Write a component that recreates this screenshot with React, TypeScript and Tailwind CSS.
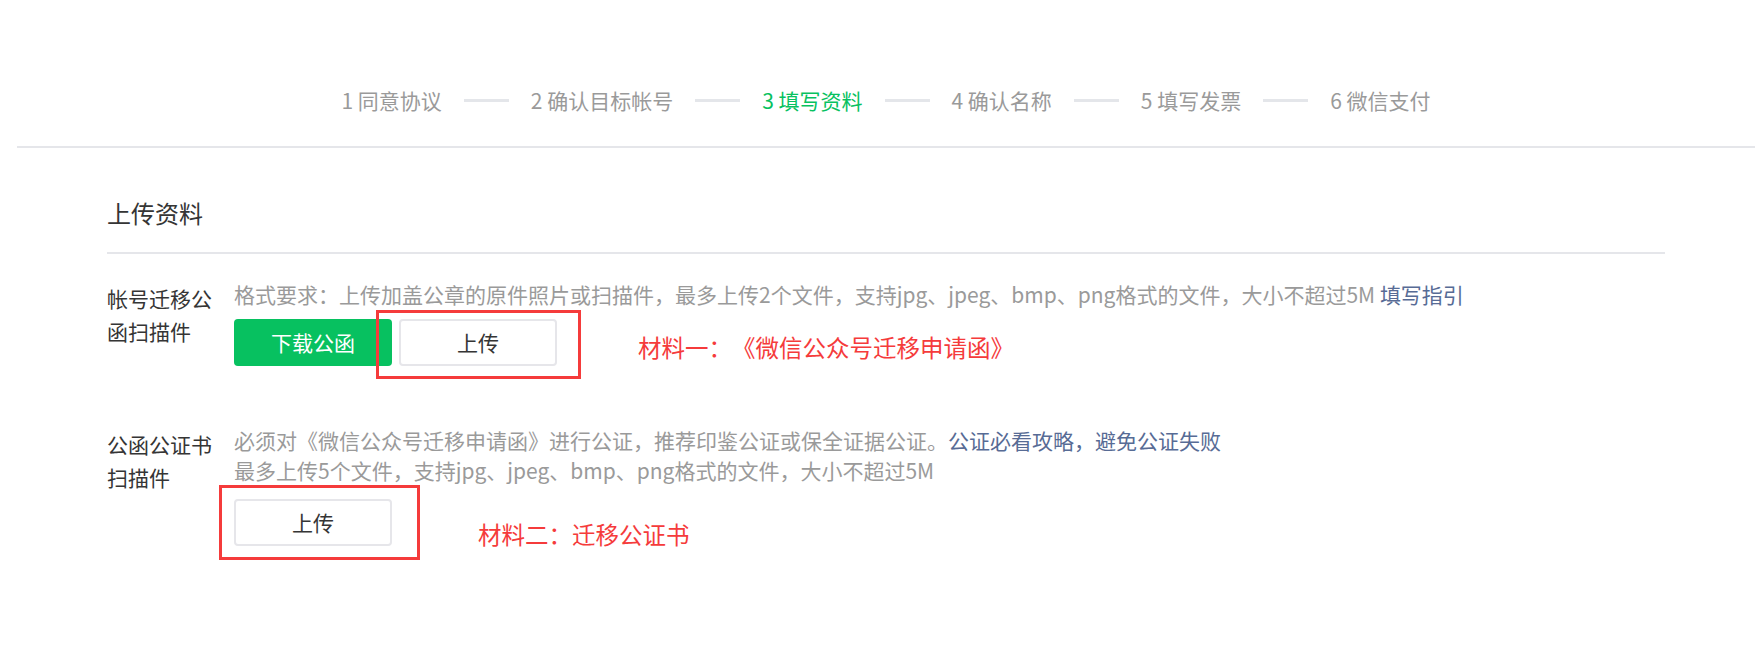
import React from "react";

const steps = [
  { label: "1 同意协议" },
  { label: "2 确认目标帐号" },
  { label: "3 填写资料", active: true },
  { label: "4 确认名称" },
  { label: "5 填写发票" },
  { label: "6 微信支付" },
];

function StepBar() {
  return (
    <div className="h-[148px] pt-[85px] border-b-2 border-[#e5e6ea] flex justify-center">
      <div className="flex items-center h-[30px]">
        {steps.map((s, i) => (
          <React.Fragment key={s.label}>
            {i > 0 && <div className="mx-[22px] h-[3px] w-[45px] bg-[#e4e6ea]" />}
            <span
              className={
                s.active
                  ? "text-[21px] leading-[30px] text-[#07c160] whitespace-nowrap"
                  : "text-[21px] leading-[30px] text-[#9a9a9a] whitespace-nowrap"
              }
            >
              {s.label}
            </span>
          </React.Fragment>
        ))}
      </div>
    </div>
  );
}

function RedNote({ children, className }: { children: React.ReactNode; className: string }) {
  return (
    <span className={"text-[23.5px] leading-[30px] text-[#f53b3b] whitespace-nowrap " + className}>
      {children}
    </span>
  );
}

function FormRow({ label, children }: { label: string; children: React.ReactNode }) {
  return (
    <div className="flex">
      <div className="w-[127px] pr-[15px] pt-[3px] shrink-0 text-[21px] leading-[33px] text-[#353535]">
        {label}
      </div>
      <div className="flex-1">{children}</div>
    </div>
  );
}

export default function App() {
  return (
    <div className="min-h-screen bg-white font-['Noto_Sans_CJK_SC','Noto_Sans',sans-serif] [text-spacing-trim:space-all]">
      <div className="ml-[17px]">
        <StepBar />

        <div className="px-[90px]">
          <div className="pt-[48px] pb-[22px] border-b-2 border-[#e5e6ea] text-[24px] leading-[34px] text-[#353535]">
            上传资料
          </div>

          <div className="mt-[25px]">
            <FormRow label="帐号迁移公函扫描件">
              <p className="text-[21px] leading-[30px] text-[#9a9a9a] whitespace-nowrap">
                格式要求：上传加盖公章的原件照片或扫描件，最多上传2个文件，支持jpg、jpeg、bmp、png格式的文件，大小不超过5M{" "}
                <a className="text-[#576b95]">填写指引</a>
              </p>
              <div className="mt-[10px] flex items-center">
                <div className="relative flex gap-[7px]">
                  <button className="w-[158px] h-[47px] rounded-[4px] bg-[#07c160] text-white text-[21px]">
                    下载公函
                  </button>
                  <button className="w-[158px] h-[47px] rounded-[4px] border-2 border-[#e6e6ea] bg-white text-[#353535] text-[21px]">
                    上传
                  </button>
                  <div className="absolute left-[142px] top-[-9px] w-[205px] h-[69px] border-[3px] border-[#f53b3b] pointer-events-none" />
                </div>
                <RedNote className="ml-[81px] mt-[9px]">材料一：《微信公众号迁移申请函》</RedNote>
              </div>
            </FormRow>
          </div>

          <div className="mt-[59px]">
            <FormRow label="公函公证书扫描件">
              <div className="text-[21px] leading-[30px] text-[#9a9a9a] whitespace-nowrap">
                <p>
                  必须对《微信公众号迁移申请函》进行公证，推荐印鉴公证或保全证据公证。
                  <a className="text-[#576b95]">公证必看攻略，避免公证失败</a>
                </p>
                <p>最多上传5个文件，支持jpg、jpeg、bmp、png格式的文件，大小不超过5M</p>
              </div>
              <div className="mt-[11px] flex items-center">
                <div className="relative">
                  <button className="w-[158px] h-[47px] rounded-[4px] border-2 border-[#e6e6ea] bg-white text-[#353535] text-[21px]">
                    上传
                  </button>
                  <div className="absolute left-[-15px] top-[-14px] w-[201px] h-[75px] border-[3px] border-[#f53b3b] pointer-events-none" />
                </div>
                <RedNote className="ml-[86px] mt-[23px]">材料二：迁移公证书</RedNote>
              </div>
            </FormRow>
          </div>
        </div>
      </div>
    </div>
  );
}
